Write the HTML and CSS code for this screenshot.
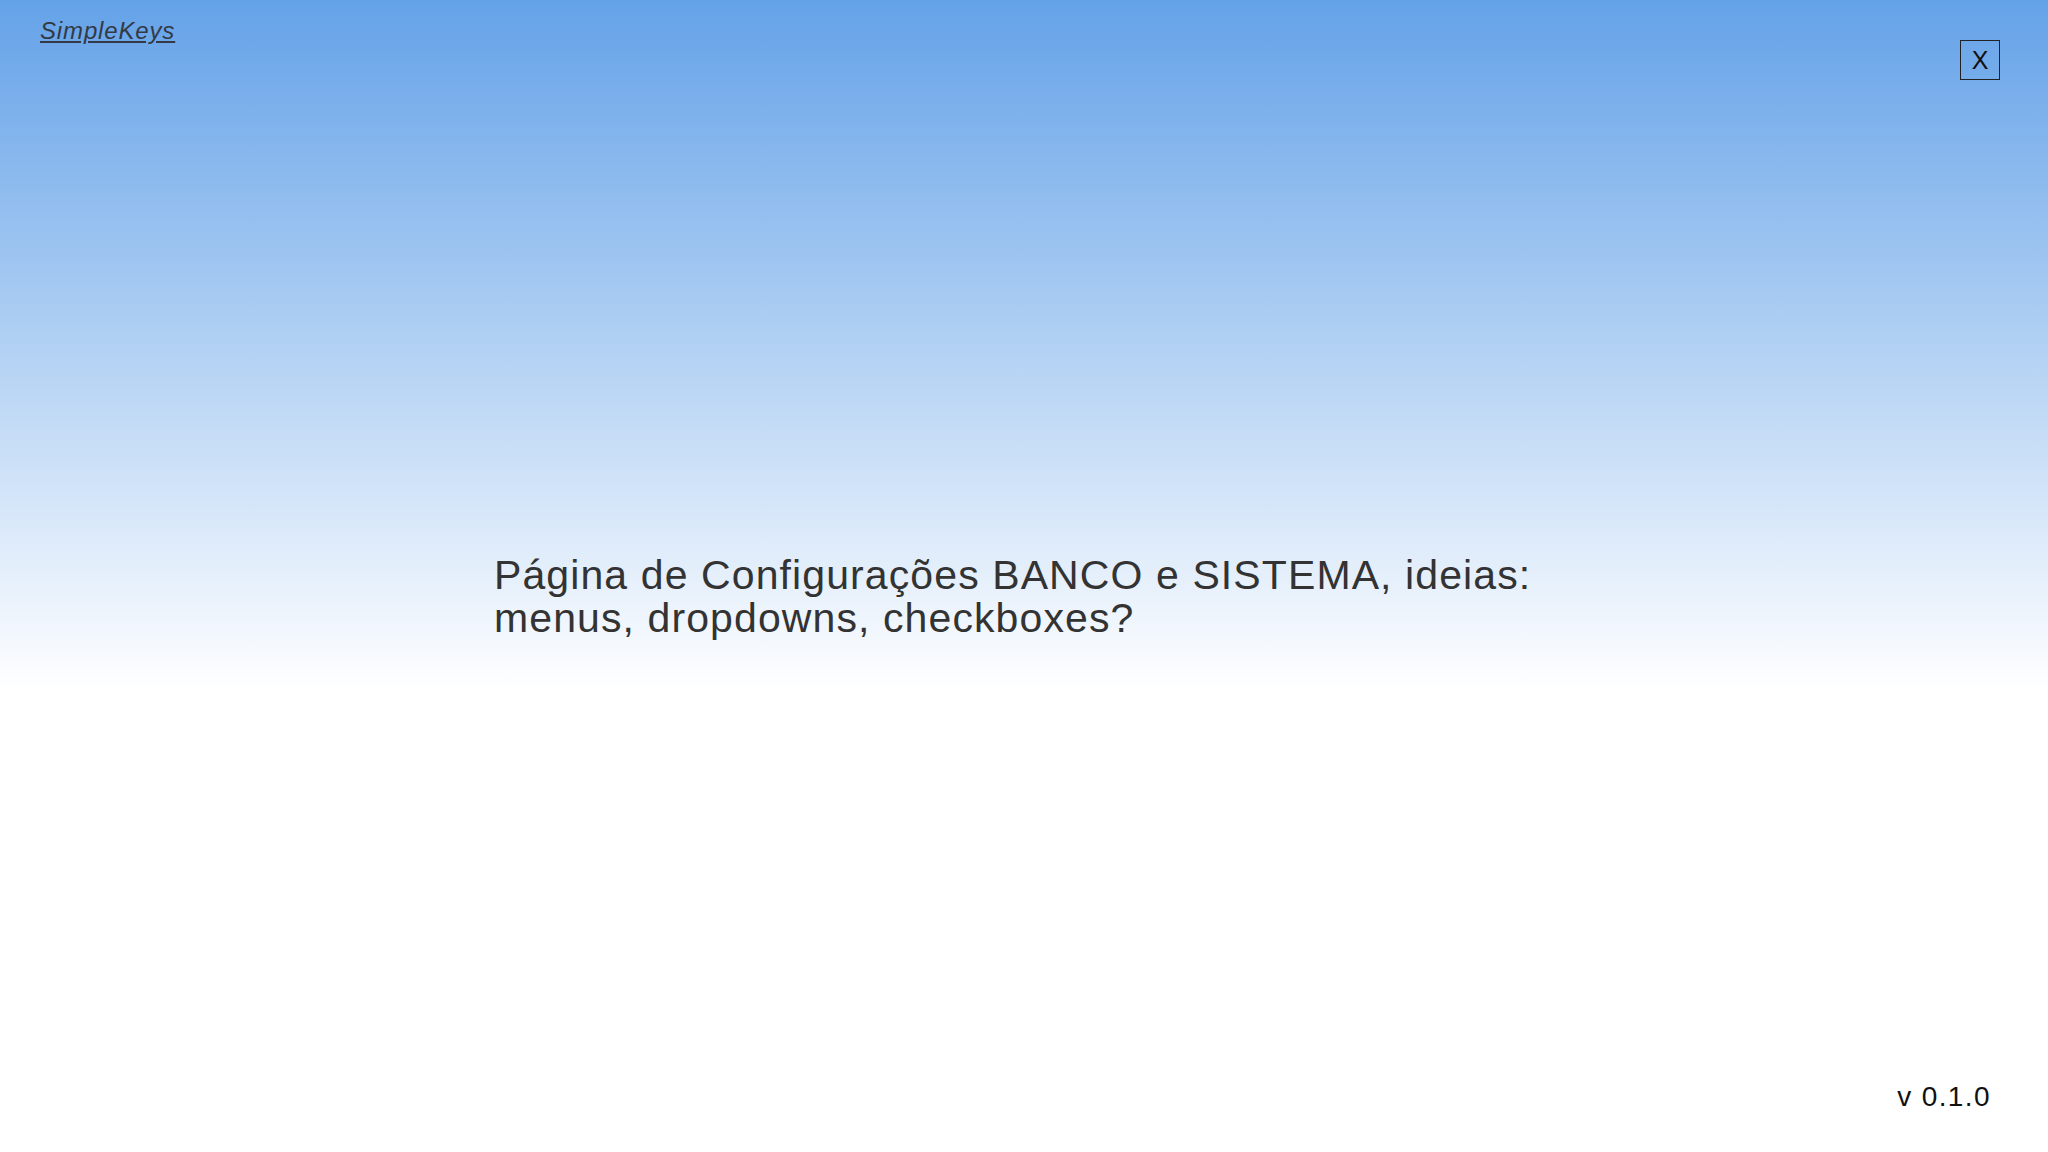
FILE: index.html
```html
<!DOCTYPE html>
<html lang="pt">
<head>
<meta charset="utf-8">
<title>SimpleKeys</title>
<link rel="stylesheet" href="styles.css">
</head>
<body>
<div class="page">
  <header class="topbar">
    <a class="logo" href="#">SimpleKeys</a>
    <button class="close-btn" type="button">X</button>
  </header>
  <main class="content">
    <p class="message">Página de Configurações BANCO e SISTEMA, ideias: menus, dropdowns, checkboxes?</p>
  </main>
  <footer class="footer">
    <span class="version">v 0.1.0</span>
  </footer>
</div>
</body>
</html>
```
FILE: styles.css
```css
* { box-sizing: border-box; }
html, body {
  margin: 0;
  height: 100%;
}
body {
  font-family: "Liberation Sans", Arial, sans-serif;
  background: linear-gradient(to bottom, #64a2e8 0%, #ffffff 60%, #ffffff 100%);
}
.page {
  height: 100vh;
  display: flex;
  flex-direction: column;
}
.topbar {
  display: flex;
  justify-content: space-between;
  align-items: flex-start;
  padding: 17px 48px 0 40px;
}
.logo {
  font-size: 24px;
  letter-spacing: 0.85px;
  font-style: italic;
  color: #333a45;
  text-decoration: underline;
}
.close-btn {
  margin-top: 23px;
  width: 40px;
  height: 40px;
  padding: 0;
  border: 1px solid #222;
  background: transparent;
  font-family: "Liberation Sans", Arial, sans-serif;
  font-size: 25px;
  line-height: 38px;
  color: #111;
}
.content {
  flex: 1;
  display: flex;
  align-items: flex-start;
  justify-content: center;
  padding-top: 474px;
}
.message {
  margin: 0;
  width: 1060px;
  font-size: 41px;
  letter-spacing: 1.1px;
  line-height: 43px;
  color: #333;
}
.footer {
  display: flex;
  justify-content: flex-end;
  padding: 0 57px 39px 0;
}
.version {
  font-size: 28px;
  letter-spacing: 1.4px;
  color: #111;
}
```
